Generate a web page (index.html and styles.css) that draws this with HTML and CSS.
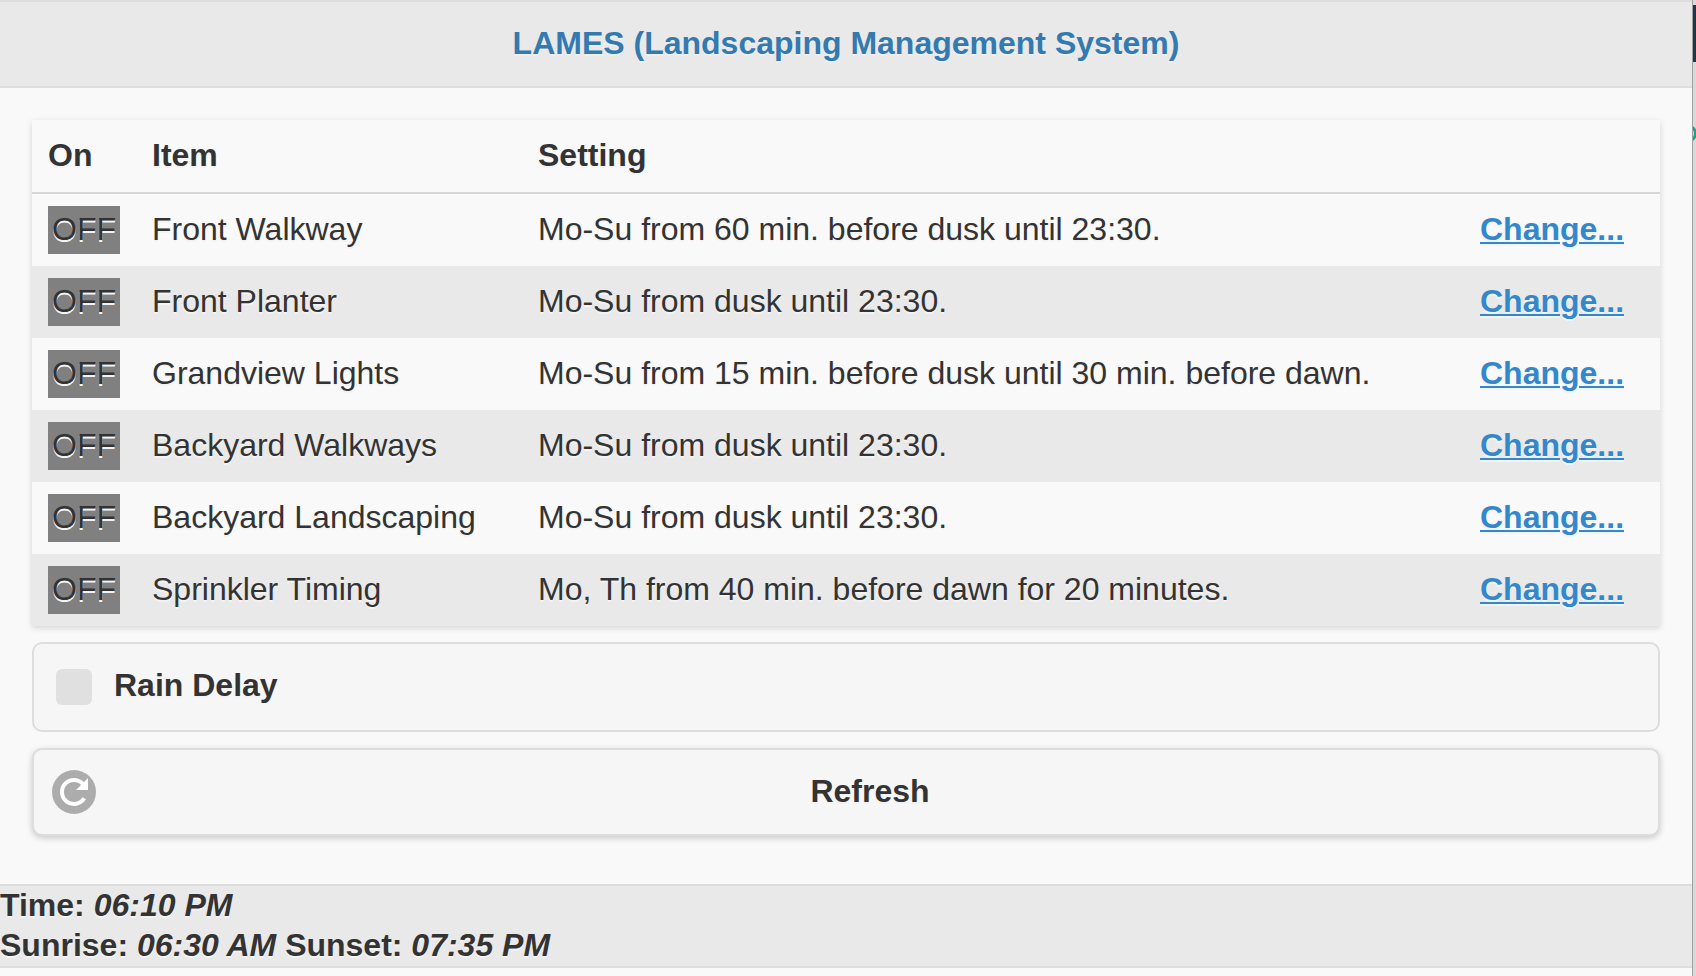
FILE: index.html
```
<!DOCTYPE html>
<html lang="en">
<head>
  <meta charset="UTF-8">
  <meta name="viewport" content="width=device-width, initial-scale=1.0">
  <title>LAMES</title>
  <link rel="stylesheet" href="styles.css">
</head>
<body>
  <div class="page">
    <header class="header">
      <h1>LAMES (Landscaping Management System)</h1>
    </header>

    <main class="content">
      <table class="items">
        <colgroup>
          <col class="col-on">
          <col class="col-item">
          <col>
          <col class="col-change">
        </colgroup>
        <thead>
          <tr>
            <th>On</th>
            <th>Item</th>
            <th>Setting</th>
            <th></th>
          </tr>
        </thead>
        <tbody>
          <tr>
            <td class="on"><span class="state">OFF</span></td>
            <td>Front Walkway</td>
            <td>Mo-Su from 60 min. before dusk until 23:30.</td>
            <td><a href="#">Change...</a></td>
          </tr>
          <tr>
            <td class="on"><span class="state">OFF</span></td>
            <td>Front Planter</td>
            <td>Mo-Su from dusk until 23:30.</td>
            <td><a href="#">Change...</a></td>
          </tr>
          <tr>
            <td class="on"><span class="state">OFF</span></td>
            <td>Grandview Lights</td>
            <td>Mo-Su from 15 min. before dusk until 30 min. before dawn.</td>
            <td><a href="#">Change...</a></td>
          </tr>
          <tr>
            <td class="on"><span class="state">OFF</span></td>
            <td>Backyard Walkways</td>
            <td>Mo-Su from dusk until 23:30.</td>
            <td><a href="#">Change...</a></td>
          </tr>
          <tr>
            <td class="on"><span class="state">OFF</span></td>
            <td>Backyard Landscaping</td>
            <td>Mo-Su from dusk until 23:30.</td>
            <td><a href="#">Change...</a></td>
          </tr>
          <tr>
            <td class="on"><span class="state">OFF</span></td>
            <td>Sprinkler Timing</td>
            <td>Mo, Th from 40 min. before dawn for 20 minutes.</td>
            <td><a href="#">Change...</a></td>
          </tr>
        </tbody>
      </table>

      <label class="box rain" for="rain-delay">
        <input type="checkbox" id="rain-delay">
        <span class="rain-text">Rain Delay</span>
      </label>

      <button type="button" class="box refresh">
        <svg class="icon" viewBox="0 0 44 44" aria-hidden="true">
          <circle cx="22" cy="22" r="22" fill="#acacac"/>
          <path d="M30.8 13.8 A12 12 0 1 0 32.2 28.2" fill="none" stroke="#fff" stroke-width="4"/>
          <path d="M36 8 V20 H24 Z" fill="#fff"/>
        </svg>
        <span class="refresh-text">Refresh</span>
      </button>
    </main>

    <footer class="footer">
      <div>Time: <i>06:10 PM</i></div>
      <div>Sunrise: <i>06:30 AM</i> Sunset: <i>07:35 PM</i></div>
    </footer>
  </div>

  <!-- sliver of the window behind -->
  <div class="edge">
    <div class="edge-bar"></div>
    <div class="edge-ring"></div>
  </div>
</body>
</html>
```
FILE: styles.css
```
* {
  box-sizing: border-box;
}
body {
  margin: 0;
  min-height: 100vh;
  display: flex;
  background: #f9f9f9;
  color: #333;
  font-family: Helvetica, "Liberation Sans", Arial, sans-serif;
  font-size: 32px;
  line-height: 38px;
  text-shadow: 0 2px 0 #f3f3f3;
}
.page {
  flex: 1;
  min-width: 0;
}
.header {
  padding: 22px 0 24px;
  background: #e9e9e9;
  border-top: 2px solid #ddd;
  border-bottom: 2px solid #ddd;
  text-align: center;
}
.header h1 {
  margin: 0;
  color: #337ab0;
  font-size: 32px;
  text-shadow: 0 2px 0 #eee;
}
.content {
  padding: 32px 32px 48px;
}

/* table */
.items {
  width: 100%;
  table-layout: fixed;
  border-collapse: separate;
  border-spacing: 0;
  box-shadow: 0 2px 6px rgba(0, 0, 0, 0.15);
}
.col-on {
  width: 104px;
}
.col-item {
  width: 386px;
}
.col-change {
  width: 196px;
}
.items th,
.items td {
  padding: 16px 16px 18px;
  text-align: left;
  vertical-align: top;
  white-space: nowrap;
}
.items th {
  border-bottom: 2px solid #d6d6d6;
}
.items .on {
  padding: 12px 16px;
}
.items tbody tr:nth-child(even) {
  background: #e9e9e9;
}
.state {
  display: block;
  padding: 4px 4px 6px;
  background: #808080;
}
.items a {
  color: #3388cc;
  font-weight: bold;
  text-decoration-thickness: 2px;
  text-underline-offset: 2px;
}

/* checkbox and button */
.box {
  display: flex;
  align-items: center;
  width: 100%;
  margin-top: 16px;
  background: #f6f6f6;
  border: 2px solid #ddd;
  border-radius: 10px;
  font-weight: bold;
}
.rain {
  gap: 22px;
  padding: 22px;
  min-height: 90px;
}
.rain input {
  appearance: none;
  width: 36px;
  height: 36px;
  margin: 0;
  background: #e0e0e0;
  border-radius: 6px;
}
.rain input:checked {
  background: #3388cc;
}
.rain-text {
  padding-bottom: 4px;
}
.refresh {
  min-height: 88px;
  padding: 20px 30px 20px 18px;
  color: inherit;
  font-family: inherit;
  font-size: 32px;
  line-height: 38px;
  text-shadow: inherit;
  box-shadow: 0 2px 6px rgba(0, 0, 0, 0.2);
}
.icon {
  width: 44px;
  height: 44px;
}
.refresh-text {
  flex: 1;
  padding: 0 0 2px 16px;
  text-align: center;
}

.footer {
  background: #e9e9e9;
  border-top: 2px solid #ddd;
  border-bottom: 2px solid #ddd;
  font-weight: bold;
}
.footer div {
  padding-bottom: 2px;
}

.edge {
  width: 4px;
  overflow: hidden;
  background: #d9d9d9;
  border-left: 1px solid #a0a0a0;
}
.edge-bar {
  height: 57px;
  margin-top: 5px;
  background: #243447;
}
.edge-ring {
  width: 17px;
  height: 17px;
  margin: 63px 0 0 -13px;
  border: 3px solid #1aa587;
  border-radius: 50%;
}
```
